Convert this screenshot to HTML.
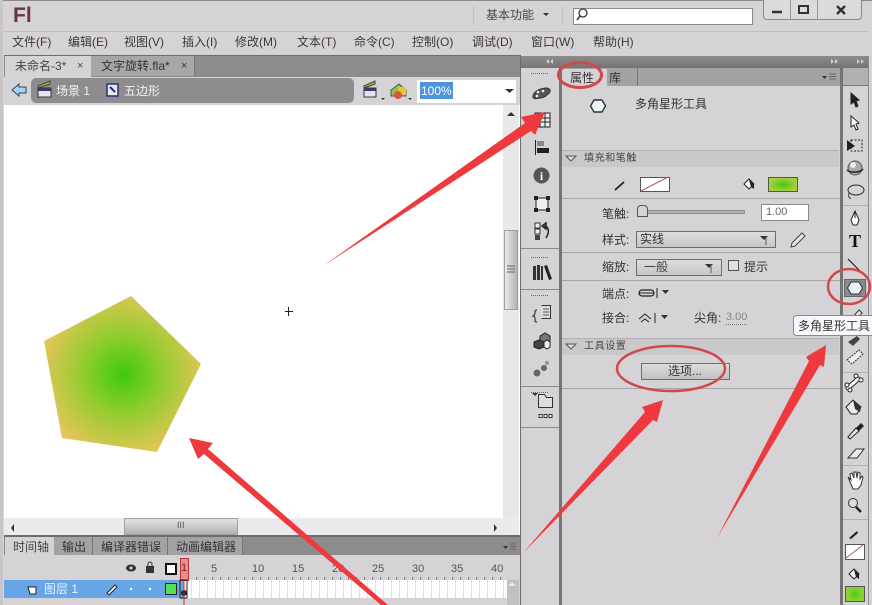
<!DOCTYPE html>
<html><head><meta charset="utf-8"><style>
html,body{margin:0;padding:0}
body{width:872px;height:605px;position:relative;overflow:hidden;background:#d6d3d6;font-family:"Liberation Sans","Noto Sans CJK SC",sans-serif;font-size:12px;color:#333;filter:blur(.35px)}
.a,.t{position:absolute}
.t{white-space:nowrap;line-height:14px}
.m{top:35px;font-size:12px;color:#3b383a}
.h{height:1px;background:#a9a6a9;position:absolute}
.lab{font-size:12px;color:#333}
.sec{position:absolute;left:562px;width:277px;height:16px;background:#cbc8cb;border-top:1px solid #b5b2b5}
.sect{font-size:10px;color:#444;letter-spacing:.6px}
.num{font-size:11px;color:#555;top:562px}
svg{position:absolute;left:0;top:0}
</style></head><body>
<!-- chrome -->
<div class="a" style="left:0;top:0;width:872px;height:1px;background:#8d8a8c"></div>
<div class="a" style="left:0;top:0;width:3px;height:605px;background:#c9c6c9"></div>
<div class="t" style="left:13px;top:4px;font-size:21px;line-height:24px;font-weight:bold;color:#6a3540">Fl</div>
<div class="t" style="left:486px;top:8px;color:#4b484a">基本功能</div>
<div class="a" style="left:473px;top:6px;width:1px;height:19px;background:#c2bfc2"></div>
<div class="a" style="left:562px;top:6px;width:1px;height:19px;background:#c2bfc2"></div>
<div class="a" style="left:573px;top:8px;width:178px;height:15px;background:#fff;border:1px solid #8c898b"></div>
<div class="a" style="left:763px;top:0;width:97px;height:19px;background:#dddadd;border:1px solid #8d8a8c;border-top:0;border-radius:0 0 4px 4px"></div>
<div class="a" style="left:790px;top:0;width:1px;height:19px;background:#9a979a"></div>
<div class="a" style="left:817px;top:0;width:1px;height:19px;background:#9a979a"></div>
<div class="h" style="left:3px;top:31px;width:866px;background:#c2bfc2"></div>
<div class="t m" style="left:12px">文件(F)</div>
<div class="t m" style="left:68px">编辑(E)</div>
<div class="t m" style="left:124px">视图(V)</div>
<div class="t m" style="left:182px">插入(I)</div>
<div class="t m" style="left:235px">修改(M)</div>
<div class="t m" style="left:297px">文本(T)</div>
<div class="t m" style="left:354px">命令(C)</div>
<div class="t m" style="left:412px">控制(O)</div>
<div class="t m" style="left:472px">调试(D)</div>
<div class="t m" style="left:531px">窗口(W)</div>
<div class="t m" style="left:593px">帮助(H)</div>
<!-- doc area -->
<div class="a" style="left:4px;top:55px;width:516px;height:22px;background:#8e8b8d;border-top:1px solid #6f6c6e"></div>
<div class="a" style="left:5px;top:56px;width:86px;height:21px;background:#d6d3d6"></div>
<div class="a" style="left:91px;top:56px;width:103px;height:20px;background:#a9a6a9;border-right:1px solid #777"></div>
<div class="t" style="left:15px;top:59px;color:#444">未命名-3*</div>
<div class="t" style="left:77px;top:59px;font-size:11px;color:#444">×</div>
<div class="t" style="left:101px;top:59px;color:#333">文字旋转.fla*</div>
<div class="t" style="left:181px;top:59px;font-size:11px;color:#333">×</div>
<div class="a" style="left:4px;top:77px;width:516px;height:28px;background:#d6d3d6"></div>
<div class="a" style="left:31px;top:78px;width:323px;height:25px;background:#8f8c8e;border-radius:5px"></div>
<div class="t" style="left:56px;top:84px;color:#f2f0f2">场景 1</div>
<div class="t" style="left:124px;top:84px;color:#f2f0f2">五边形</div>
<div class="a" style="left:417px;top:80px;width:99px;height:23px;background:#fff"></div>
<div class="a" style="left:420px;top:82px;width:33px;height:17px;background:#4d94dd"></div>
<div class="t" style="left:421px;top:84px;color:#fff">100%</div>
<div class="a" style="left:4px;top:105px;width:516px;height:430px;background:#fff"></div>
<div class="a" style="left:503px;top:105px;width:16px;height:413px;background:#e9e7e9"></div>
<div class="a" style="left:504px;top:230px;width:14px;height:80px;background:linear-gradient(90deg,#ecebec,#b5b2b5);border:1px solid #a3a0a3;box-sizing:border-box"></div>
<div class="a" style="left:4px;top:518px;width:515px;height:17px;background:#eceaec"></div>
<div class="a" style="left:124px;top:518px;width:112px;height:15px;background:linear-gradient(#e4e2e4,#b5b2b5);border:1px solid #a3a0a3"></div>
<div class="t" style="left:177px;top:518px;font-size:9px;color:#555">III</div>
<!-- timeline -->
<div class="a" style="left:4px;top:535px;width:516px;height:2px;background:#6f6c6e"></div>
<div class="a" style="left:4px;top:537px;width:516px;height:18px;background:#8e8b8d"></div>
<div class="a" style="left:5px;top:537px;width:49px;height:19px;background:#d6d3d6"></div>
<div class="a" style="left:54px;top:537px;width:188px;height:18px;background:#a5a2a5"></div>
<div class="a" style="left:92px;top:537px;width:1px;height:18px;background:#777"></div>
<div class="a" style="left:167px;top:537px;width:1px;height:18px;background:#777"></div>
<div class="a" style="left:242px;top:537px;width:1px;height:18px;background:#777"></div>
<div class="t" style="left:13px;top:540px;color:#444">时间轴</div>
<div class="t" style="left:62px;top:540px;color:#333">输出</div>
<div class="t" style="left:101px;top:540px;color:#333">编译器错误</div>
<div class="t" style="left:176px;top:540px;color:#333">动画编辑器</div>
<div class="a" style="left:4px;top:555px;width:516px;height:25px;background:#d6d3d6"></div>
<div class="a" style="left:188px;top:577px;width:319px;height:3px;background:repeating-linear-gradient(90deg,#777 0,#777 1px,transparent 1px,transparent 8px)"></div>
<div class="t num" style="left:211px">5</div>
<div class="t num" style="left:252px">10</div>
<div class="t num" style="left:292px">15</div>
<div class="t num" style="left:332px">20</div>
<div class="t num" style="left:372px">25</div>
<div class="t num" style="left:412px">30</div>
<div class="t num" style="left:451px">35</div>
<div class="t num" style="left:491px">40</div>
<div class="a" style="left:4px;top:580px;width:180px;height:18px;background:#67a5e6"></div>
<div class="a" style="left:184px;top:580px;width:323px;height:18px;background:repeating-linear-gradient(90deg,#fff 0,#fff 7px,#e2e0e2 7px,#e2e0e2 8px)"></div>
<div class="a" style="left:4px;top:598px;width:503px;height:7px;background:#d6d3d6"></div>
<div class="a" style="left:507px;top:580px;width:12px;height:25px;background:#c3c0c3"></div>
<div class="t" style="left:44px;top:582px;color:#e8f2fc">图层 1</div>
<div class="a" style="left:180px;top:558px;width:7px;height:21px;background:#f08a8a;border:1px solid #b33"></div>
<div class="t" style="left:181px;top:561px;font-size:11px;color:#632">1</div>
<div class="a" style="left:165px;top:583px;width:10px;height:10px;background:#55e055;border:1px solid #222"></div>
<div class="a" style="left:165px;top:563px;width:8px;height:8px;border:2px solid #111;background:#fff"></div>
<!-- right panels -->
<div class="a" style="left:520px;top:55px;width:352px;height:550px;background:#d6d3d6"></div>
<div class="a" style="left:520px;top:55px;width:1px;height:550px;background:#6f6c6e"></div>
<div class="a" style="left:521px;top:56px;width:347px;height:12px;background:linear-gradient(#8e8b8d,#767375)"></div>
<div class="a" style="left:559px;top:68px;width:3px;height:537px;background:#767375"></div>
<div class="a" style="left:840px;top:68px;width:3px;height:537px;background:#767375"></div>
<div class="a" style="left:868px;top:56px;width:1px;height:549px;background:#8e8b8d"></div>
<div class="a" style="left:562px;top:68px;width:278px;height:18px;background:#a5a2a5"></div>
<div class="a" style="left:562px;top:69px;width:45px;height:18px;background:#d6d3d6"></div>
<div class="a" style="left:637px;top:68px;width:1px;height:18px;background:#777"></div>
<div class="t" style="left:570px;top:71px;color:#333">属性</div>
<div class="t" style="left:609px;top:71px;color:#333">库</div>
<div class="a" style="left:843px;top:68px;width:25px;height:17px;background:#b3b0b3"></div>
<div class="h" style="left:843px;top:85px;width:25px;background:#777"></div>
<div class="h" style="left:521px;top:248px;width:38px;background:#8c898b"></div>
<div class="h" style="left:521px;top:289px;width:38px;background:#8c898b"></div>
<div class="h" style="left:521px;top:386px;width:38px;background:#8c898b"></div>
<div class="h" style="left:521px;top:427px;width:38px;background:#8c898b"></div>
<div class="h" style="left:843px;top:205px;width:25px;background:#b5b2b5"></div>
<div class="h" style="left:843px;top:372px;width:25px;background:#b5b2b5"></div>
<div class="h" style="left:843px;top:465px;width:25px;background:#b5b2b5"></div>
<div class="h" style="left:843px;top:519px;width:25px;background:#b5b2b5"></div>
<div class="t" style="left:635px;top:97px;color:#333">多角星形工具</div>
<div class="sec" style="top:150px"></div>
<div class="t sect" style="left:584px;top:152px">填充和笔触</div>
<div class="a" style="left:640px;top:177px;width:28px;height:13px;background:#fff;border:1px solid #555"></div>
<div class="a" style="left:768px;top:177px;width:28px;height:13px;border:1px solid #555;background:radial-gradient(ellipse closest-side,#3fcb12,#a8cf3c)"></div>
<div class="h" style="left:562px;top:198px;width:278px"></div>
<div class="t lab" style="left:602px;top:207px">笔触:</div>
<div class="a" style="left:640px;top:210px;width:103px;height:2px;background:#b4b1b4;border:1px solid #918e91"></div>
<div class="a" style="left:637px;top:205px;width:9px;height:10px;background:#d6d3d6;border:1px solid #555;border-radius:4px 4px 0 0"></div>
<div class="a" style="left:761px;top:204px;width:46px;height:15px;background:#fff;border:1px solid #8c898b"></div>
<div class="t" style="left:766px;top:205px;font-size:11px;color:#666">1.00</div>
<div class="t lab" style="left:602px;top:233px">样式:</div>
<div class="a" style="left:636px;top:231px;width:138px;height:15px;background:linear-gradient(#ddd,#c8c5c8);border:1px solid #6f6c6e"></div>
<div class="t" style="left:640px;top:232px;color:#333">实线</div>
<div class="h" style="left:562px;top:252px;width:278px"></div>
<div class="t lab" style="left:602px;top:260px">缩放:</div>
<div class="a" style="left:636px;top:259px;width:84px;height:15px;background:linear-gradient(#ddd,#c8c5c8);border:1px solid #6f6c6e"></div>
<div class="t" style="left:644px;top:260px;color:#444">一般</div>
<div class="a" style="left:728px;top:260px;width:9px;height:9px;border:1px solid #555;background:#e2e0e2"></div>
<div class="t" style="left:744px;top:260px;color:#333">提示</div>
<div class="h" style="left:562px;top:280px;width:278px"></div>
<div class="t lab" style="left:602px;top:287px">端点:</div>
<div class="t lab" style="left:602px;top:311px">接合:</div>
<div class="t lab" style="left:694px;top:311px">尖角:</div>
<div class="t" style="left:726px;top:311px;font-size:11px;color:#888;border-bottom:1px dotted #777;line-height:13px">3.00</div>
<div class="sec" style="top:338px"></div>
<div class="t sect" style="left:584px;top:340px">工具设置</div>
<div class="a" style="left:641px;top:363px;width:87px;height:15px;background:linear-gradient(#ddd,#c2bfc2);border:1px solid #6f6c6e"></div>
<div class="t" style="left:668px;top:364px;color:#333">选项...</div>
<div class="h" style="left:562px;top:388px;width:278px"></div>
<div class="t" style="left:849px;top:232px;font-family:'Liberation Serif',serif;font-size:18px;font-weight:bold;line-height:18px;color:#111">T</div>
<div class="a" style="left:844px;top:279px;width:22px;height:18px;background:#8d8a8c;border:1px solid #666;box-sizing:border-box"></div>
<div class="a" style="left:845px;top:544px;width:18px;height:14px;background:#fff;border:1px solid #555"></div>
<div class="a" style="left:845px;top:586px;width:18px;height:14px;border:1px solid #555;background:radial-gradient(circle closest-side,#3fd212,#8fcf35)"></div>
<!-- graphics -->
<svg width="872" height="605" viewBox="0 0 872 605">
<defs><radialGradient id="g" gradientUnits="userSpaceOnUse" cx="123" cy="374" r="82"><stop offset="0" stop-color="#3fca0e"/><stop offset=".5" stop-color="#95cc30"/><stop offset="1" stop-color="#e2c557"/></radialGradient></defs>
<polygon points="131,296 201,364 157,452 62,438 44,341" fill="url(#g)"/>
<path d="M285 311.500h8M288.500 307v9" stroke="#222" fill="none"/>
<!-- doc icons -->
<path d="M12 90l7-6v3h7v6h-7v3z" fill="#a8d4f4" stroke="#345"/>
<rect x="38" y="88" width="13" height="9" fill="#e6e4f0" stroke="#334"/><rect x="38" y="88" width="13" height="3" fill="#3b3a6b"/><path d="M38 86l12-5v3l-12 4z" fill="#b9b048" stroke="#443"/>
<rect x="107" y="84" width="11" height="12" fill="#e8e8f4" stroke="#2b2f6b" stroke-width="1.500"/><path d="M110 87l5 5" stroke="#2b2f6b" stroke-width="2"/>
<rect x="364" y="88" width="12" height="9" fill="#e6e4f0" stroke="#334"/><rect x="364" y="88" width="12" height="3" fill="#3b3a6b"/><path d="M364 86l11-5v3l-11 4z" fill="#b9b048" stroke="#443"/>
<path d="M391 90l8-6 7 6v6h-15z" fill="#8ec04a" stroke="#555"/><rect x="398" y="87" width="8" height="8" fill="#e2c63c"/><circle cx="398" cy="95" r="4" fill="#d9573c"/>
<path d="M381 98l4 0-2 2zM408 98l4 0-2 2zM543 13l6 0-3 3zM505 89l9 0-4.500 4zM760 236l8 0-4 4zM705 264l8 0-4 4zM662 290l7 0-3.500 4zM661 315l7 0-3.500 4zM822 76l5 0-2.500 3zM503 546l5 0-2.500 3z" fill="#333"/>
<path d="M829 74h7M829 76.500h7M829 79h7M510 544h6M510 546.500h6M510 549h6" stroke="#666" fill="none"/>
<!-- search -->
<circle cx="583" cy="13" r="4" fill="none" stroke="#333" stroke-width="1.300"/><path d="M580 16l-3 4" stroke="#333" stroke-width="1.500"/>
<!-- window buttons -->
<path d="M772 12h10" stroke="#333" stroke-width="2.500"/><rect x="799" y="6" width="9" height="7" fill="none" stroke="#333" stroke-width="2"/><path d="M837 6l8 8M845 6l-8 8" stroke="#333" stroke-width="2.500"/>
<!-- panel arrows -->
<path d="M553 59l-3 2.500 3 2.500zM549 59l-3 2.500 3 2.500zM831 59l3 2.500-3 2.500zM835 59l3 2.500-3 2.500zM857 59l3 2.500-3 2.500zM861 59l3 2.500-3 2.500z" fill="#ccc"/>
<!-- strip -->
<g stroke="#666" stroke-dasharray="1 1"><path d="M531 73.500h18M531 257.500h18M531 295.500h18M531 392.500h18"/></g>
<path d="M533 97c0-6 8-9 14-9 5 1 3 5 1 6-2 2-4 4-8 4-4 1-7 1-7-1z" fill="#555" stroke="#333"/><circle cx="538" cy="92" r="1.300" fill="#eee"/><circle cx="543" cy="91" r="1.300" fill="#eee"/><circle cx="537" cy="96" r="1.300" fill="#eee"/>
<path d="M535 113h15v14h-15zM535 118h15M535 122h15M540 113v14M545 113v14" fill="#eee" stroke="#222"/>
<path d="M535.500 140v15" stroke="#222"/><rect x="537" y="141" width="7" height="5" fill="#888"/><rect x="537" y="148" width="12" height="5" fill="#222"/>
<circle cx="541.500" cy="175.500" r="8" fill="#555"/><text x="541.500" y="180" font-size="12" font-weight="bold" text-anchor="middle" fill="#fff" font-family="Liberation Serif,serif">i</text>
<rect x="536" y="198" width="12" height="12" fill="#eee" stroke="#222"/><g fill="#222"><rect x="534" y="196" width="4" height="4"/><rect x="546" y="196" width="4" height="4"/><rect x="534" y="208" width="4" height="4"/><rect x="546" y="208" width="4" height="4"/></g>
<path d="M535 223h5v5h-5zM535 229h5v5h-5z" fill="#eee" stroke="#333"/><rect x="535" y="235" width="5" height="5" fill="#444"/><path d="M544 226c4 0 5 4 4 8l-2 4M542 226l4-3v6z" fill="none" stroke="#222" stroke-width="1.500"/>
<g fill="#333"><rect x="533" y="266" width="3" height="14"/><rect x="537" y="265" width="3" height="15"/><rect x="541" y="266" width="2" height="14"/></g><path d="M544 266l3-1 5 14-3 1z" fill="#222"/>
<path d="M537 310c-2 0-2 1-2 3s-1 2-2 3c1 0 2 0 2 3s0 3 2 3" fill="none" stroke="#333" stroke-width="1.200"/><path d="M541.500 305.500h9v13h-9" fill="#ddd" stroke="#333"/><path d="M543 309h6M543 312h6M543 315h6" stroke="#555"/>
<g stroke="#222" fill="#eee"><path d="M540 336l5-3 5 3v5l-5 3-5-3z" fill="#777"/><path d="M534 342l5-2 5 2v5l-5 2-5-2z" fill="#444"/><path d="M544 342l3-2 3 2v5l-3 2-3-2z"/></g>
<circle cx="537" cy="373" r="3.500" fill="#666"/><circle cx="544" cy="368" r="3" fill="#666"/><circle cx="547" cy="363" r="2.200" fill="#999"/>
<path d="M532 393h6l-3 3z" fill="#333"/><path d="M538.500 394.500h6l2 3h6v10h-14z" fill="#ddd" stroke="#333"/><path d="M539 414.500h3v3h-3zM544 414.500h3v3h-3zM549 414.500h3v3h-3z" fill="#fff" stroke="#333"/>
<!-- properties icons -->
<path d="M594 100h8l3.500 6-3.500 6h-8l-3.500-6z" fill="#eef5fa" stroke="#333" stroke-width="1.400"/>
<path d="M566 156l10 0-5 5z" fill="#ddd" stroke="#555"/><path d="M566 344l10 0-5 5z" fill="#ddd" stroke="#555"/>
<path d="M615 190l9-8" stroke="#222" stroke-width="1.800"/><path d="M641 191l27-14" stroke="#b35a62"/>
<path d="M744 184l5-5 5 5-5 5z" fill="#fff" stroke="#222"/><path d="M749 180l5 4v5l-3-2z" fill="#222"/>
<path d="M766 236v9M711 264v9" stroke="#555"/>
<path d="M792 243l10-10 3 3-10 10-4 1z" fill="#e8e6e8" stroke="#444"/>
<rect x="639" y="290" width="15" height="6" rx="3" fill="none" stroke="#222" stroke-width="1.200"/><path d="M639 293h15M657 288v10M655 313v10" stroke="#222"/>
<path d="M639 319l6-5 6 5M641 322l4-3 4 3" stroke="#222" fill="none"/>
<!-- tools -->
<path d="M851 93l8 7-3 1 2 5-2 1-2-5-3 2z" fill="#222" stroke="#222"/>
<path d="M851 116l8 7-3 1 2 5-2 1-2-5-3 2z" fill="#fff" stroke="#222"/>
<rect x="851" y="140" width="11" height="11" fill="none" stroke="#222" stroke-dasharray="2 1.500"/><path d="M847 140l8 6-8 5z" fill="#222"/>
<circle cx="855" cy="168" r="7" fill="#aaa" stroke="#555"/><path d="M847 170c3 3 13 3 16-1" fill="none" stroke="#222" stroke-width="1.500"/><circle cx="853" cy="165" r="3" fill="#eee"/>
<ellipse cx="856" cy="190" rx="8" ry="5" fill="none" stroke="#333"/><path d="M849 193c-1 3 0 6 2 5" fill="none" stroke="#333"/>
<path d="M855 211l4 9-2 5h-4l-2-5z" fill="#fff" stroke="#222"/><path d="M855 211v7" stroke="#222"/>
<path d="M848 259l13 13" stroke="#222" stroke-width="1.200"/>
<path d="M851 282h8l3.500 6-3.500 6h-8l-3.500-6z" fill="#e6f3f8" stroke="#333"/>
<path d="M850 320l9-10 3 3-9 9z" fill="#eee" stroke="#333"/>
<path d="M848 342l9-6 3 3-7 7z" fill="#444"/>
<path d="M847 360l12-10 4 4-11 10z" fill="#eee" stroke="#333" stroke-dasharray="2 1"/>
<path d="M848 388l10-9" stroke="#222" stroke-width="5" stroke-linecap="round"/><path d="M848 388l10-9" stroke="#fff" stroke-width="3" stroke-linecap="round"/><circle cx="847" cy="385" r="2" fill="#fff" stroke="#222"/><circle cx="850" cy="390" r="2" fill="#fff" stroke="#222"/><circle cx="856" cy="376" r="2" fill="#fff" stroke="#222"/><circle cx="861" cy="380" r="2" fill="#fff" stroke="#222"/>
<path d="M846 407l7-7 8 7-4 7h-6z" fill="#eee" stroke="#222"/><path d="M853 400l8 7-1 5-5-3z" fill="#333"/>
<path d="M848 437l8-9 3 3-9 8z" fill="#e8e6e8" stroke="#222"/><path d="M856 428l5-5 3 3-5 5z" fill="#222"/>
<path d="M848 458l8-9h8l-7 9z" fill="#eee" stroke="#333"/>
<path d="M848 477l3 3-1-6 2-1 2 5v-6l2 0 1 6 1-6 2 1v6l2-3 1 1-2 8-3 4h-5z" fill="#fff" stroke="#333"/>
<circle cx="853" cy="503" r="4.500" fill="#ddd" stroke="#333"/><path d="M856 507l5 5" stroke="#222" stroke-width="2.500"/>
<path d="M849 538l8-7 1 2-7 6z" fill="#222"/><path d="M846 558l17-13" stroke="#b35a62"/>
<path d="M849 574l5-5 5 5-5 5z" fill="#fff" stroke="#222"/><path d="M854 570l5 4v5l-3-2z" fill="#222"/>
<!-- timeline icons -->
<ellipse cx="131" cy="568" rx="5" ry="3.500" fill="#333"/><circle cx="131" cy="568" r="1.500" fill="#ddd"/>
<rect x="146" y="566" width="8" height="7" fill="#333"/><path d="M148 566v-2a2 2 0 0 1 4 0v2" fill="none" stroke="#333"/>
<circle cx="184" cy="593" r="3" fill="#222"/><path d="M184 581v24" stroke="#b33"/><rect x="180" y="580" width="7" height="18" fill="none" stroke="#222"/>
<path d="M28 587h8v7h-6z" fill="#fff" stroke="#222"/>
<path d="M107 593l8-8 2 2-8 8z" fill="#fff" stroke="#223"/><circle cx="131" cy="589" r="1.200" fill="#fff"/><circle cx="150" cy="589" r="1.200" fill="#fff"/>
<path d="M512 582l-4 4h8z" fill="#e6e4e6"/>
<path d="M11 528l3-4v8zM494 524l3 4-3 4zM511 112l-4 4h8z" fill="#333"/>
<path d="M507 266h8M507 269h8M507 272h8" stroke="#666"/>
<!-- red ellipses -->
<g fill="none" stroke="#cf4a4c" stroke-width="2.500">
<ellipse cx="580" cy="75" rx="21.500" ry="12.500" stroke-width="3"/>
<ellipse cx="671" cy="368.500" rx="54" ry="22.500"/>
<ellipse cx="849" cy="286.500" rx="21" ry="17.500"/>
</g>
<!-- tooltip -->
<rect x="793.500" y="315.500" width="84" height="20" rx="3" fill="#f8f7fb" stroke="#8c898b"/>
<text x="798" y="330" font-size="12" fill="#333" font-family="Liberation Sans,Noto Sans CJK SC,sans-serif">多角星形工具</text>
<!-- arrows -->
<g fill="#ee3a3e">
<path d="M323 266L525 123l-4-6 24-5-10 23-4-4z"/>
<path d="M189 438l24 5-5 6 180 156h-7L204 454l-6 5z"/>
<path d="M523 553L645 412l-3-5 21-7-6 22-4-2z"/>
<path d="M717 538L809 361l-3-4 20-12-2 22-4-2z"/>
</g>
</svg>
</body></html>
